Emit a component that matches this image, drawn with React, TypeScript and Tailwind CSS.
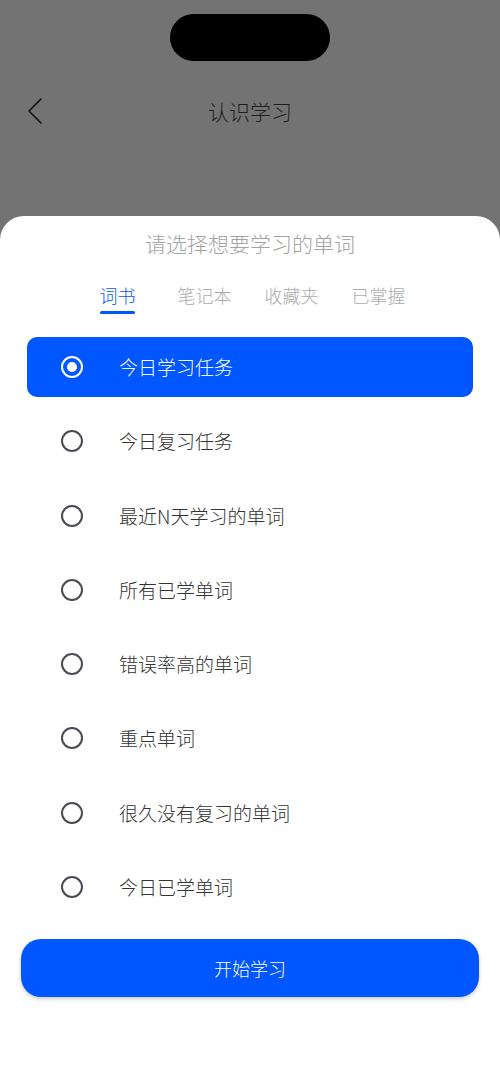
import React from 'react'

const tabs = ['词书', '笔记本', '收藏夹', '已掌握']

const options = [
  '今日学习任务',
  '今日复习任务',
  '最近N天学习的单词',
  '所有已学单词',
  '错误率高的单词',
  '重点单词',
  '很久没有复习的单词',
  '今日已学单词',
]

function Radio({ checked }: { checked: boolean }) {
  if (checked) {
    return (
      <span className="flex h-[22px] w-[22px] items-center justify-center rounded-full border-[2.5px] border-white">
        <span className="h-[10px] w-[10px] rounded-full bg-white" />
      </span>
    )
  }
  return <span className="block h-[22px] w-[22px] rounded-full border-[2.5px] border-[#4a4a55]" />
}

export default function App() {
  const [tab, setTab] = React.useState(0)
  const [selected, setSelected] = React.useState(0)

  return (
    <div
      className="flex h-[1084px] w-[500px] flex-col bg-[#737373] font-light"
      style={{ fontFamily: '"Noto Sans CJK SC", "Noto Sans", sans-serif' }}
    >
      <div className="mx-auto mt-[14px] h-[47px] w-[160px] rounded-full bg-black" />

      <div className="relative flex h-[100px] items-center justify-center">
        <button className="absolute left-[26px] top-[35px] text-[#111]">
          <svg width="18" height="30" viewBox="0 0 18 30" fill="none">
            <path d="M15 3 L3 15 L15 27" stroke="currentColor" strokeWidth="1.6" strokeLinecap="round" strokeLinejoin="round" />
          </svg>
        </button>
        <h1 className="text-[21px] leading-[28px] text-[#1e1e1e]">认识学习</h1>
      </div>

      <div className="mt-[55px] flex flex-1 flex-col rounded-t-[24px] bg-white">
        <p className="pt-[13px] text-center text-[21px] leading-[28px] text-[#a3a3a3]">请选择想要学习的单词</p>

        <div className="mt-[26px] flex justify-center pr-[4px]">
          {tabs.map((t, i) => (
            <button key={t} onClick={() => setTab(i)} className="flex w-[87px] flex-col items-center">
              <span className={`text-[18px] leading-[24px] ${i === tab ? 'text-[#0057ff]' : 'text-[#ababab]'}`}>{t}</span>
              <span className={`mt-[4px] h-[3px] w-[35px] rounded-full ${i === tab ? 'bg-[#0057ff]' : 'bg-transparent'}`} />
            </button>
          ))}
        </div>

        <div className="mt-[23px] flex flex-col gap-[14.3px] px-[27px]">
          {options.map((o, i) => (
            <button
              key={o}
              onClick={() => setSelected(i)}
              className={`flex h-[60px] items-center rounded-[10px] pl-[34px] text-left ${
                i === selected ? 'bg-[#0057ff] text-white' : 'text-[#333333]'
              }`}
            >
              <Radio checked={i === selected} />
              <span className="ml-[36px] text-[19px] leading-[26px]">{o}</span>
            </button>
          ))}
        </div>

        <div className="mt-[22px] px-[21px]">
          <button className="h-[58px] w-full rounded-[20px] bg-[#0057ff] text-[18px] text-white shadow-[0_2px_4px_rgba(0,0,0,0.2)]">
            开始学习
          </button>
        </div>
      </div>
    </div>
  )
}
